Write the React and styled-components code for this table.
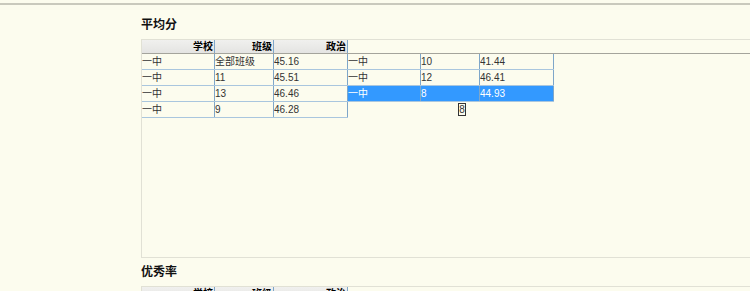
import React from "react";
import styled, { createGlobalStyle } from "styled-components";

const GlobalStyle = createGlobalStyle`
  html, body {
    margin: 0;
    padding: 0;
    background: #fcfcee;
    overflow: hidden;
    font-family: "Liberation Sans", "Noto Sans CJK SC", sans-serif;
  }
`;

const columns = [
  { key: "school", title: "学校", width: 73 },
  { key: "klass", title: "班级", width: 59 },
  { key: "score", title: "政治", width: 74 },
];

const rows = [
  { school: "一中", klass: "全部班级", score: "45.16" },
  { school: "一中", klass: "11", score: "45.51" },
  { school: "一中", klass: "13", score: "46.46" },
  { school: "一中", klass: "9", score: "46.28" },
  { school: "一中", klass: "10", score: "41.44" },
  { school: "一中", klass: "12", score: "46.41" },
  { school: "一中", klass: "8", score: "44.93", selected: true },
];

function Grid({ editing }) {
  return (
    <Panel>
      <Header>
        {columns.map((c) => (
          <HeadCell key={c.key} $w={c.width}>
            {c.title}
          </HeadCell>
        ))}
      </Header>
      <Body>
        {rows.map((r, i) => (
          <Row key={i} $selected={r.selected}>
            {columns.map((c) => (
              <Cell key={c.key} $w={c.width}>
                {r[c.key]}
              </Cell>
            ))}
          </Row>
        ))}
        {editing && <Editor>8</Editor>}
      </Body>
    </Panel>
  );
}

export default function App() {
  return (
    <>
      <GlobalStyle />
      <TopLine />
      <Page>
        <Title>平均分</Title>
        <Grid editing />
        <Title>优秀率</Title>
        <Grid />
      </Page>
    </>
  );
}

const TopLine = styled.div`
  height: 3px;
  border-bottom: 2px solid #c9c9bd;
`;

const Page = styled.div`
  padding: 6px 0 0 141px;
`;

const Title = styled.div`
  font-size: 12px;
  font-weight: bold;
  line-height: 14px;
  padding: 7px 0 7px;
  color: #111;
`;

const Panel = styled.div`
  box-sizing: border-box;
  width: 660px;
  height: 219px;
  border: 1px solid #e1e1d5;
  border-right: none;
  position: relative;
`;

const Header = styled.div`
  display: flex;
  height: 13px;
  border-bottom: 1px solid #a4a49c;
`;

const HeadCell = styled.div`
  box-sizing: border-box;
  width: ${(p) => p.$w}px;
  background: linear-gradient(#f0f0ee, #e4e4e2);
  border-right: 1px solid #7ea6c9;
  font-size: 10px;
  font-weight: bold;
  line-height: 13px;
  text-align: right;
  padding-right: 1px;
  color: #000;
`;

const Body = styled.div`
  position: relative;
  display: flex;
  flex-direction: column;
  flex-wrap: wrap;
  align-content: flex-start;
  height: 64px;
`;

const Row = styled.div`
  display: flex;
  width: 206px;
  height: 16px;
  box-sizing: border-box;
  border-bottom: 1px solid #a9c6de;
  background: ${(p) => (p.$selected ? "#3399ff" : "transparent")};
  color: ${(p) => (p.$selected ? "#fff" : "#333")};
`;

const Cell = styled.div`
  box-sizing: border-box;
  width: ${(p) => p.$w}px;
  border-right: 1px solid #7ea6c9;
  font-size: 10px;
  line-height: 15px;
  white-space: nowrap;
  overflow: hidden;
`;

const Editor = styled.div`
  position: absolute;
  left: 316px;
  top: 49px;
  width: 6px;
  height: 11px;
  border: 1px solid #333;
  background: #fcfcee;
  font-size: 10px;
  line-height: 11px;
  color: #333;
  text-align: center;
`;
